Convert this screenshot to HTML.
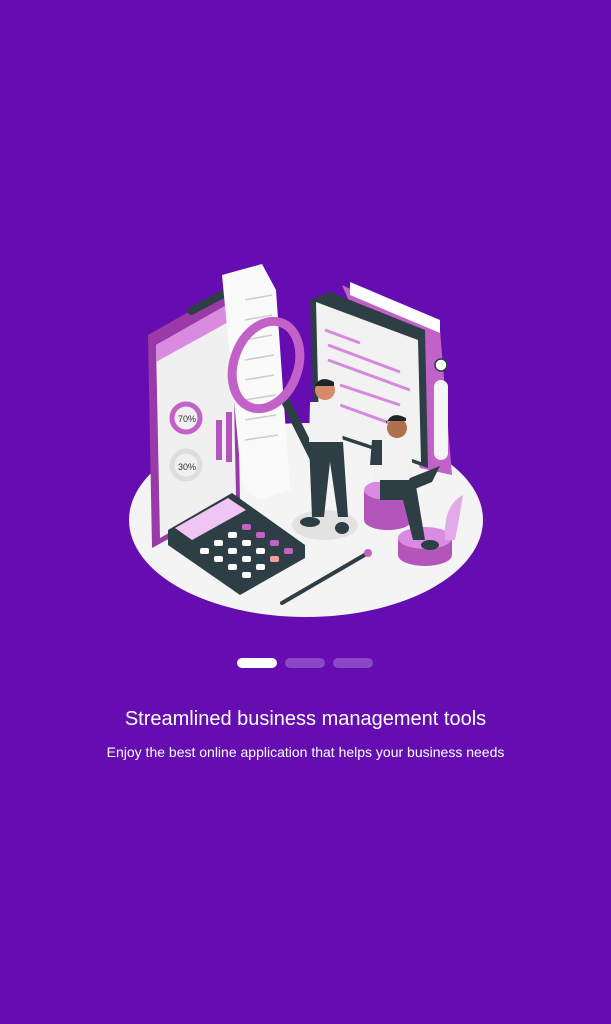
<!DOCTYPE html>
<html><head><meta charset="utf-8"><style>
html,body{margin:0;padding:0}
body{width:611px;height:1024px;background:#650db0;position:relative;overflow:hidden;font-family:"Liberation Sans",Roboto,sans-serif;color:#fff}
.dot{position:absolute;top:658px;height:10px;width:40px;border-radius:5px;background:#8a47c4}
h1{position:absolute;top:708px;left:0;width:611px;text-align:center;margin:0;font-size:20px;font-weight:normal}
p{position:absolute;top:744px;left:0;width:611px;text-align:center;margin:0;font-size:14px}
svg{position:absolute;left:0;top:0}
</style></head><body>
<svg width="611" height="640" viewBox="0 0 611 640">
<ellipse cx="306" cy="520" rx="177" ry="97" fill="#f4f4f4"/>
<!-- clipboard -->
<polygon points="148,335 236,285 240,500 152,548" fill="#9a3aa8"/>
<polygon points="156,345 232,302 236,495 160,538" fill="#f0f0f0"/>
<polygon points="156,345 232,302 232,320 156,362" fill="#d88be0"/>
<circle cx="186" cy="418" r="14" fill="none" stroke="#c262c8" stroke-width="5"/>
<circle cx="186" cy="465" r="14" fill="none" stroke="#ddd" stroke-width="5"/>
<text x="178" y="422" font-size="9" fill="#333">70%</text>
<text x="178" y="470" font-size="9" fill="#333">30%</text>
<rect x="185" y="297" width="50" height="8" rx="4" fill="#2d3e44" transform="rotate(-28 210 301)"/>
<!-- receipt -->
<polygon points="222,275 262,264 276,290 290,490 258,500 242,485" fill="#fafafa"/>
<g stroke="#ccc" stroke-width="1.5"><line x1="245" y1="300" x2="272" y2="295"/><line x1="245" y1="320" x2="272" y2="315"/><line x1="245" y1="340" x2="272" y2="335"/><line x1="245" y1="360" x2="274" y2="355"/><line x1="245" y1="380" x2="274" y2="375"/><line x1="245" y1="400" x2="276" y2="395"/><line x1="245" y1="420" x2="276" y2="415"/><line x1="245" y1="440" x2="278" y2="435"/></g>
<rect x="216" y="420" width="6" height="40" fill="#b355bb"/><rect x="226" y="412" width="6" height="50" fill="#b355bb"/>
<!-- binder -->
<polygon points="342,285 440,330 452,475 420,468" fill="#c262c8"/>
<polygon points="310,300 330,292 425,330 428,468 314,430" fill="#2d3e44"/>
<polygon points="316,302 418,340 421,462 319,428" fill="#f2f2f2"/>
<g stroke="#d58ade" stroke-width="3"><line x1="325" y1="330" x2="360" y2="343"/><line x1="328" y1="345" x2="400" y2="372"/><line x1="328" y1="360" x2="410" y2="390"/><line x1="340" y1="385" x2="400" y2="405"/><line x1="340" y1="405" x2="395" y2="425"/></g>
<polygon points="350,282 440,320 440,333 350,295" fill="#fff"/>
<rect x="434" y="380" width="14" height="80" rx="7" fill="#f5f5f5"/>
<circle cx="441" cy="365" r="6" fill="#fff" stroke="#2d3e44" stroke-width="1.5"/>
<!-- magnifier -->
<line x1="285" y1="400" x2="320" y2="470" stroke="#2d3e44" stroke-width="9" stroke-linecap="round"/>
<ellipse cx="266" cy="365" rx="32" ry="45" fill="none" stroke="#c262c8" stroke-width="9" transform="rotate(20 266 365)"/>
<!-- person 1 -->
<ellipse cx="325" cy="525" rx="33" ry="15" fill="#e2e2e2"/>
<circle cx="325" cy="390" r="10" fill="#d88b6a"/><path d="M314 388 q5-14 20-6 v4 h-18z" fill="#1d2528"/>
<path d="M310 402 h30 l3 42 h-34z" fill="#f2f2f2"/>
<path d="M309 442 h34 l5 75 h-10 l-8-55 -6 55 h-12z" fill="#2d3e44"/>
<ellipse cx="310" cy="522" rx="10" ry="5" fill="#2d3e44"/><ellipse cx="342" cy="528" rx="7" ry="6" fill="#2d3e44"/>
<!-- coins -->
<g fill="#b355bb"><ellipse cx="388" cy="520" rx="24" ry="10"/><rect x="364" y="490" width="48" height="30"/><ellipse cx="388" cy="490" rx="24" ry="10" fill="#d88be0"/></g>
<g fill="#b355bb"><ellipse cx="425" cy="555" rx="27" ry="11"/><rect x="398" y="538" width="54" height="17"/><ellipse cx="425" cy="538" rx="27" ry="11" fill="#d88be0"/></g>
<path d="M445 540 q-2-35 18-45 q-4 25 -8 45z" fill="#e3a9ea"/>
<!-- person 2 -->
<circle cx="397" cy="428" r="10" fill="#b0704e"/><path d="M386 424 q5-14 20-6 v3 h-20z" fill="#1d2528"/>
<path d="M372 440 h38 l4 42 h-40z" fill="#f2f2f2"/><path d="M372 440 h10 v25 h-12z" fill="#2d3e44"/>
<path d="M380 480 h35 l10 60 h-12 l-10-40 h-23z" fill="#2d3e44"/>
<polygon points="400,495 432,482 440,466 410,478" fill="#2d3e44"/>
<ellipse cx="430" cy="545" rx="9" ry="5" fill="#2d3e44"/>
<!-- calculator -->
<polygon points="168,530 232,493 305,545 305,558 240,595 168,545" fill="#2d3e44"/>
<polygon points="175,528 228,498 246,510 192,540" fill="#efc5f3"/>
<g fill="#fff">
<rect x="200" y="548" width="9" height="6" rx="2"/><rect x="214" y="556" width="9" height="6" rx="2"/><rect x="228" y="564" width="9" height="6" rx="2"/><rect x="242" y="572" width="9" height="6" rx="2"/>
<rect x="214" y="540" width="9" height="6" rx="2"/><rect x="228" y="548" width="9" height="6" rx="2"/><rect x="242" y="556" width="9" height="6" rx="2"/><rect x="256" y="564" width="9" height="6" rx="2"/>
<rect x="228" y="532" width="9" height="6" rx="2"/><rect x="242" y="540" width="9" height="6" rx="2"/><rect x="256" y="548" width="9" height="6" rx="2"/><rect x="270" y="556" width="9" height="6" rx="2" fill="#f0a0a0"/>
<rect x="242" y="524" width="9" height="6" rx="2" fill="#c262c8"/><rect x="256" y="532" width="9" height="6" rx="2" fill="#c262c8"/><rect x="270" y="540" width="9" height="6" rx="2" fill="#c262c8"/><rect x="284" y="548" width="9" height="6" rx="2" fill="#c262c8"/>
</g>
<!-- pencil -->
<line x1="282" y1="603" x2="368" y2="553" stroke="#2d3e44" stroke-width="4" stroke-linecap="round"/>
<circle cx="368" cy="553" r="4" fill="#c262c8"/>
</svg>
<div class="dot" style="left:237px;background:#fff"></div>
<div class="dot" style="left:285px"></div>
<div class="dot" style="left:333px"></div>
<h1>Streamlined business management tools</h1>
<p>Enjoy the best online application that helps your business needs</p>
</body></html>
